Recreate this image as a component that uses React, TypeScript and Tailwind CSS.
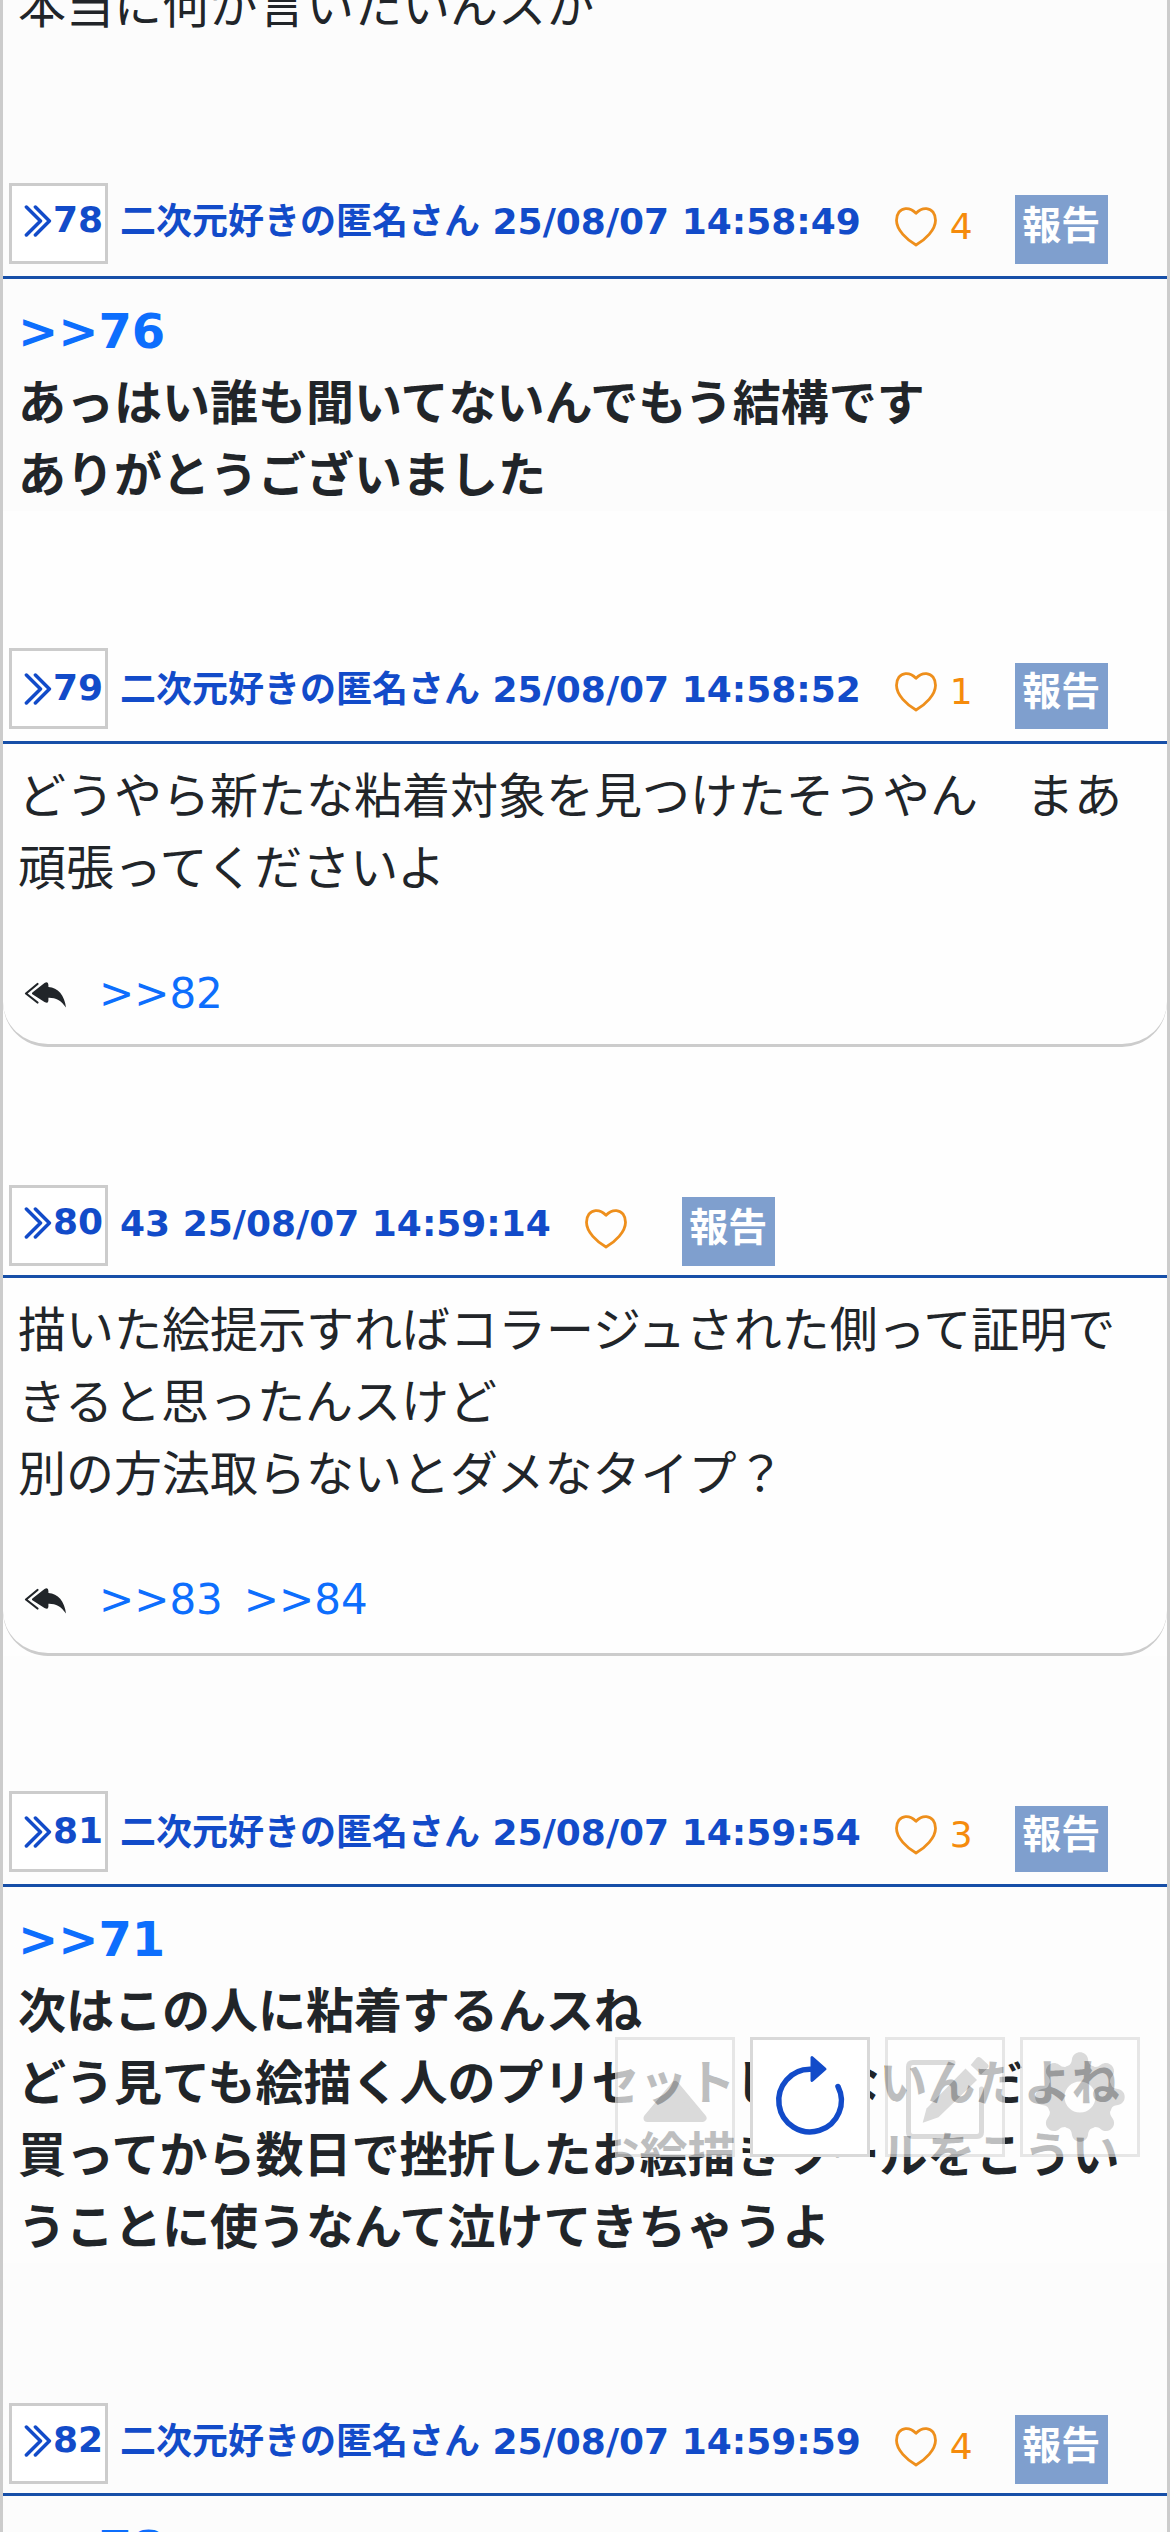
import React from "react";

const NAME = "二次元好きの匿名さん";

type Post = {
  id: number;
  name: string;
  date: string;
  likes?: string;
  quote?: string;
  lines: string[];
  bold?: boolean;
  replies?: string[];
  tone: string;
  // offset above the header, header height, label offset inside it, reply row height
  top: string;
  header: string;
  label: string;
  report: string;
  replyRow?: string;
};

const REPORT_TALL = "mt-[12px] h-[69px] leading-[62px]";
const REPORT_SHORT = "mt-[15px] h-[66px] leading-[58px]";

const posts: Post[] = [
  {
    id: 78, name: NAME, date: "25/08/07 14:58:49", likes: "4", quote: ">>76", bold: true,
    lines: ["あっはい誰も聞いてないんでもう結構です", "ありがとうございました"],
    tone: "bg-[#fcfcfc]", top: "pt-[141px]", header: "h-[96px]", label: "pt-0", report: REPORT_TALL,
  },
  {
    id: 79, name: NAME, date: "25/08/07 14:58:52", likes: "1",
    lines: ["どうやら新たな粘着対象を見つけたそうやん　まあ", "頑張ってくださいよ"],
    replies: [">>82"], tone: "bg-[#fefefe]", top: "pt-[137px]", header: "h-[96px]", label: "pt-[3px]", report: REPORT_SHORT, replyRow: "h-[143px]",
  },
  {
    id: 80, name: "43", date: "25/08/07 14:59:14",
    lines: ["描いた絵提示すればコラージュされた側って証明で", "きると思ったんスけど", "別の方法取らないとダメなタイプ？"],
    replies: [">>83", ">>84"], tone: "bg-[#fefefe]", top: "pt-[138px]", header: "h-[93px]", label: "pt-0", report: REPORT_TALL, replyRow: "h-[146px]",
  },
  {
    id: 81, name: NAME, date: "25/08/07 14:59:54", likes: "3", quote: ">>71", bold: true,
    lines: ["次はこの人に粘着するんスね", "どう見ても絵描く人のプリセットじゃないんだよね", "買ってから数日で挫折したお絵描きツールをこうい", "うことに使うなんて泣けてきちゃうよ"],
    tone: "bg-[#fdfdfd]", top: "pt-[135px]", header: "h-[96px]", label: "pt-[3px]", report: REPORT_SHORT,
  },
  {
    id: 82, name: NAME, date: "25/08/07 14:59:59", likes: "4", quote: ">>78", bold: true,
    lines: [], tone: "bg-[#fcfcfc]", top: "pt-[140px]", header: "h-[93px]", label: "pt-0", report: REPORT_TALL,
  },
];

function Chevrons() {
  return (
    <svg className="h-[32px] w-[28px] shrink-0" viewBox="0 0 28 32" fill="none" stroke="currentColor" strokeWidth="3.500" strokeLinecap="round" strokeLinejoin="round">
      <path d="M2.400 2 L16.5 16 L2.400 30" />
      <path d="M11.4 2 L25.4 16 L11.4 30" />
    </svg>
  );
}

function Heart() {
  return (
    <svg className="h-[40px] w-[42px] shrink-0" viewBox="0 0 42 40" fill="none" stroke="#ee8f1c" strokeWidth="2.8" strokeLinejoin="round">
      <path d="M21 6.2 C17.5 2.6 13.8 1.3 10.5 1.6 C5 2.1 1.5 6.8 1.5 13.3 C1.5 23 12 33 21 38 C30 33 40.5 23 40.5 13.3 C40.5 6.8 37 2.1 31.5 1.6 C28.2 1.3 24.5 2.6 21 6.2 Z" />
    </svg>
  );
}

function ReplyArrow() {
  return (
    <svg className="h-[26px] w-[42px] shrink-0" viewBox="0 0 42 26" fill="#212529">
      <path d="M13.5 2 L2 11.5 L13.5 20.5" fill="none" stroke="#212529" strokeWidth="2.2" strokeLinecap="round" strokeLinejoin="round" />
      <path d="M8.4 10.5 L20.5 1 Q24.4 -1 24.4 3 V5 C34 5.6 40.5 13 42 25.6 C37 18 31.500 15.500 24.400 15.700 V18.500 Q24.400 22 20.500 20 L8.400 12.300 Q7.500 11.400 8.400 10.500 Z" />
    </svg>
  );
}

function PostHeader({ post }: { post: Post }) {
  return (
    <header className={`flex items-start border-b-[3px] border-[#174fa8] pl-[6px] text-[36px] leading-[54px] ${post.header}`}>
      <div className="h-[81px] w-[99px] shrink-0 border-[3px] border-[#ccc] bg-white pl-[12px] text-[#124bc9]">
        <div className={post.label}>
          <div className="flex items-start pt-[19px]">
            <Chevrons />
            <span className="-mt-[6px] ml-[1px] font-bold leading-[42px]">{post.id}</span>
          </div>
        </div>
      </div>
      <div className={`ml-[12px] whitespace-pre font-bold text-[#124bc9] ${post.label}`}>
        <div className="mt-[12px]">{post.name} {post.date}</div>
      </div>
      <div className="ml-[34px] mt-[24px] flex items-start text-[#f58b0c]">
        <Heart />
        <span className="-mt-[7px] ml-[13px]">{post.likes}</span>
      </div>
      <div className={`ml-[42px] w-[93px] bg-[#7f9fce] text-center text-[39px] font-bold text-white ${post.report}`}>報告</div>
    </header>
  );
}

function PostItem({ post }: { post: Post }) {
  return (
    <article className={`${post.tone} ${post.top}`}>
      <PostHeader post={post} />
      <div className={`pl-[15px] pt-[16px] text-[48px] leading-[72px] text-[#212529] ${post.bold ? "font-bold" : ""}`}>
        {post.quote && <div className="text-[#0d6efd]">{post.quote}</div>}
        {post.lines.map((line) => (
          <div key={line} className="whitespace-nowrap">{line}</div>
        ))}
      </div>
      {post.replies && (
        <div className={`flex items-start rounded-b-[45px] border-b-[3px] border-[#ccc] pl-[21px] pt-[66px] text-[42px] leading-[48px] text-[#0d6efd] ${post.replyRow}`}>
          <div className="mt-[12px]"><ReplyArrow /></div>
          <div className="ml-[33px] flex gap-[21px]">
            {post.replies.map((r) => <span key={r}>{r}</span>)}
          </div>
        </div>
      )}
    </article>
  );
}

function UpIcon() {
  return (
    <svg viewBox="0 0 114 114" className="size-full" fill="#ccc" stroke="#ccc" strokeWidth="8" strokeLinejoin="round">
      <path d="M57 45 L84.500 78 H29.500 Z" />
    </svg>
  );
}

function ReloadIcon() {
  return (
    <svg viewBox="0 0 114 114" className="size-full" fill="none" stroke="#124bc9" strokeWidth="5.500" strokeLinecap="round">
      <path d="M85 46.500 A31.300 31.300 0 1 1 57.500 29.300" />
      <path d="M59 17.500 L72 29 L59 40.500 Z" fill="#124bc9" strokeWidth="3" strokeLinejoin="round" />
    </svg>
  );
}

function EditIcon() {
  return (
    <svg viewBox="0 0 114 114" className="size-full" fill="#ccc">
      <path d="M65 22.500 H25 Q20.500 22.500 20.500 27 V92 Q20.500 96.500 25 96.500 H89 Q93.500 96.500 93.500 92 V49" fill="none" stroke="#ccc" strokeWidth="5" strokeLinecap="round" />
      <path d="M37 82 L34.700 82.700 L38.500 68.500 L77.500 28.500 L89 40 L50.500 77.300 Z" />
      <path d="M82.700 25 L88.500 18 Q90.500 15.800 93 18 L99.500 24 Q101.500 26 99.700 28 L93 34.500 Z" />
    </svg>
  );
}

function GearIcon() {
  return (
    <svg viewBox="-57 -57 114 114" className="size-full" fill="none">
      <circle r="24.500" stroke="#ccc" strokeWidth="18" />
      {[0, 45, 90, 135, 180, 225, 270, 315].map((a) => (
        <path key={a} transform={`rotate(${a})`} fill="#ccc" d="M-14 -29 C-9 -33 -8.500 -34 -8 -38 C-6.500 -47 6.500 -47 8 -38 C8.500 -34 9 -33 14 -29 Z" />
      ))}
    </svg>
  );
}

function ToolButton({ children, active }: { children: React.ReactNode; active?: boolean }) {
  return (
    <div className={`size-[120px] border-[3px] bg-white ${active ? "border-[#d9d9d9]" : "border-[#ddd] opacity-70"}`}>
      {children}
    </div>
  );
}

export default function App() {
  return (
    <main lang="ja" className="relative h-[2532px] w-[1170px] overflow-hidden border-x-[3px] border-[#ccc] bg-[#fcfcfc] font-['DejaVu_Sans','Noto_Sans_CJK_JP',sans-serif]">
      <div className="-mt-[30px] h-[72px] whitespace-nowrap pl-[15px] text-[48px] leading-[72px] text-[#212529]">本当に何が言いたいんスか</div>
      {posts.map((post) => <PostItem key={post.id} post={post} />)}
      <nav className="absolute right-[27px] top-[2037px] flex gap-[15px]">
        <ToolButton><UpIcon /></ToolButton>
        <ToolButton active><ReloadIcon /></ToolButton>
        <ToolButton><EditIcon /></ToolButton>
        <ToolButton><GearIcon /></ToolButton>
      </nav>
    </main>
  );
}
